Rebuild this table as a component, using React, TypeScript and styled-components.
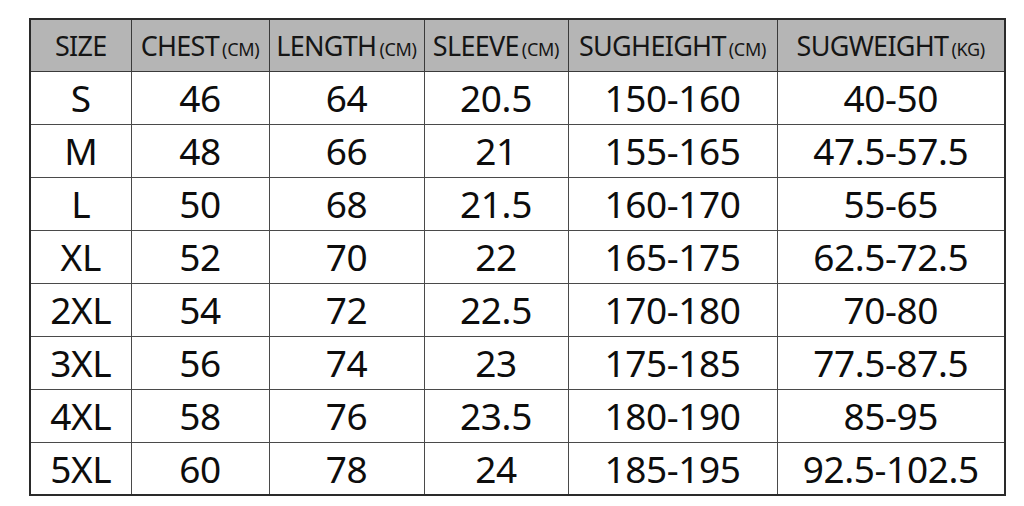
import React from "react";
import styled, { createGlobalStyle } from "styled-components";

const Global = createGlobalStyle`
  html, body { margin: 0; padding: 0; background: #ffffff; }
  body { font-family: "Noto Sans", "Open Sans", sans-serif; color: #111; }
`;

const Page = styled.div`
  width: 1024px;
  height: 506px;
  box-sizing: border-box;
  padding: 18px 0 0 29px;
  background: #fff;
`;

const Table = styled.table`
  border-collapse: collapse;
  table-layout: fixed;
  width: 975px;
  border: 2px solid #2a2a2a;
`;

const HeadRow = styled.tr`
  height: 52px;
  background: #b5b5b5;
`;

const BodyRow = styled.tr`
  height: 53px;
  background: #fff;
`;

const HeadCell = styled.th`
  border: 1px solid #3a3a3a;
  padding: 0;
  font-weight: 400;
  font-size: 27px;
  letter-spacing: -0.7px;
  white-space: nowrap;
  text-align: center;
  vertical-align: middle;
  color: #151515;
`;

const Unit = styled.span`
  font-size: 18px;
  letter-spacing: -0.3px;
  margin-left: 3px;
`;

const Cell = styled.td`
  border: 1px solid #4a4a4a;
  padding: 0;
  font-size: 37px;
  letter-spacing: -0.4px;
  text-align: center;
  vertical-align: middle;
  white-space: nowrap;
  color: #0d0d0d;
`;

const widths = [101, 138, 155, 144, 209, 228];

const headers: { label: string; unit?: string }[] = [
  { label: "SIZE" },
  { label: "CHEST", unit: "(CM)" },
  { label: "LENGTH", unit: "(CM)" },
  { label: "SLEEVE", unit: "(CM)" },
  { label: "SUGHEIGHT", unit: "(CM)" },
  { label: "SUGWEIGHT", unit: "(KG)" },
];

const rows = [
  ["S", "46", "64", "20.5", "150-160", "40-50"],
  ["M", "48", "66", "21", "155-165", "47.5-57.5"],
  ["L", "50", "68", "21.5", "160-170", "55-65"],
  ["XL", "52", "70", "22", "165-175", "62.5-72.5"],
  ["2XL", "54", "72", "22.5", "170-180", "70-80"],
  ["3XL", "56", "74", "23", "175-185", "77.5-87.5"],
  ["4XL", "58", "76", "23.5", "180-190", "85-95"],
  ["5XL", "60", "78", "24", "185-195", "92.5-102.5"],
];

export default function App() {
  return (
    <>
      <Global />
      <Page>
        <Table>
          <colgroup>
            {widths.map((w, i) => (
              <col key={i} style={{ width: w }} />
            ))}
          </colgroup>
          <thead>
            <HeadRow>
              {headers.map((h) => (
                <HeadCell key={h.label}>
                  {h.label}
                  {h.unit && <Unit>{h.unit}</Unit>}
                </HeadCell>
              ))}
            </HeadRow>
          </thead>
          <tbody>
            {rows.map((r) => (
              <BodyRow key={r[0]}>
                {r.map((v, i) => (
                  <Cell key={i}>{v}</Cell>
                ))}
              </BodyRow>
            ))}
          </tbody>
        </Table>
      </Page>
    </>
  );
}
